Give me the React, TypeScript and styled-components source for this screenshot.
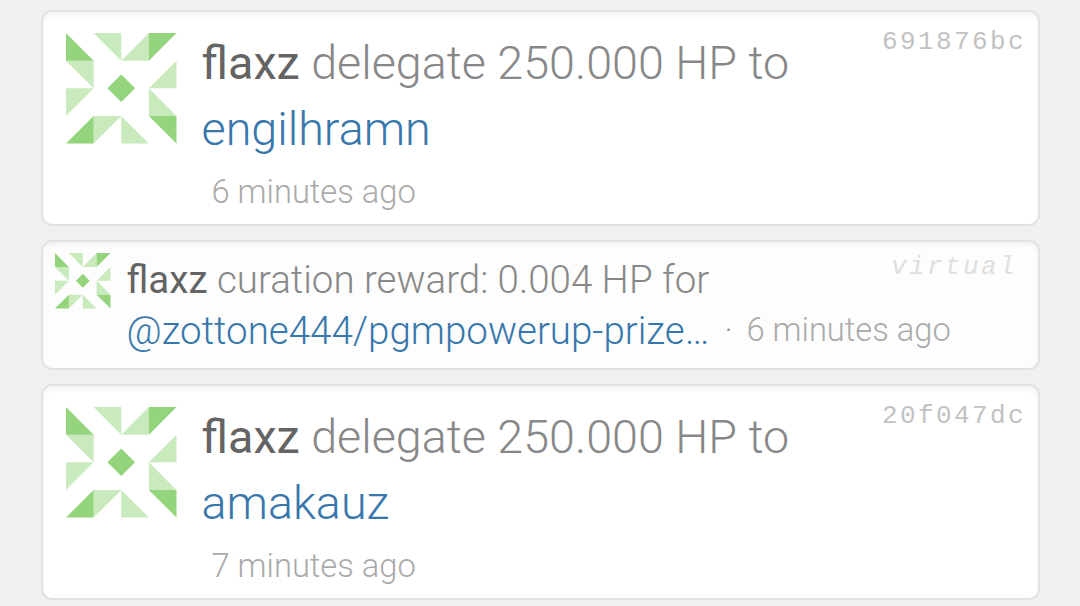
import React from 'react';
import styled, { createGlobalStyle } from 'styled-components';

type Operation = {
  id: string;
  actor: string;
  action: string;
  target: string;
  time: string;
  virtual?: boolean;
};

const operations: Operation[] = [
  { id: '691876bc', actor: 'flaxz', action: 'delegate 250.000 HP to', target: 'engilhramn', time: '6 minutes ago' },
  {
    id: 'virtual',
    actor: 'flaxz',
    action: 'curation reward: 0.004 HP for',
    target: '@zottone444/pgmpowerup-prize…',
    time: '6 minutes ago',
    virtual: true,
  },
  { id: '20f047dc', actor: 'flaxz', action: 'delegate 250.000 HP to', target: 'amakauz', time: '7 minutes ago' },
];

const Avatar = ({ size }: { size: number }) => (
  <AvatarSvg width={size} height={size} viewBox="0 0 4 4">
    <path fill="#c9eabc" d="M1 0H2V1ZM3 0V1H2ZM0 1H1V2ZM4 1V2H3ZM0 2H1L0 3ZM3 2L4 3H3ZM1 3H2L1 4ZM2 3L3 4H2Z" />
    <path fill="#93d47c" d="M0 0L1 1H0ZM3 0H4L3 1ZM1 3V4H0ZM3 3H4V4ZM2 1.5L2.5 2L2 2.5L1.5 2Z" />
  </AvatarSvg>
);

const App = () => {
  return (
    <>
      <GlobalStyle />
      <Container>
        {operations.map((op) => (
          <Card key={op.id} $small={op.virtual}>
            <Avatar size={op.virtual ? 55.5 : 110.5} />
            <Content $small={op.virtual}>
              <Header>
                <Title>
                  <Actor>{op.actor}</Actor> {op.action}
                </Title>
                <TxId $virtual={op.virtual}>{op.id}</TxId>
              </Header>
              <Line>
                <Target>{op.target}</Target>
                {op.virtual && <Dot>·</Dot>}
                {op.virtual && <Time $inline>{op.time}</Time>}
              </Line>
              {!op.virtual && <Time>{op.time}</Time>}
            </Content>
          </Card>
        ))}
      </Container>
    </>
  );
};

const GlobalStyle = createGlobalStyle`
  * {
    box-sizing: border-box;
  }
  body {
    margin: 0;
    height: 606px;
    overflow: hidden;
    background-color: #f0f0f0;
    font-family: Roboto, sans-serif;
    font-weight: 300;
  }
`;

const Container = styled.div`
  display: flex;
  flex-direction: column;
  gap: 14px;
  padding: 10px 40px 0 41px;
`;

const Card = styled.div<{ $small?: boolean }>`
  display: flex;
  align-items: flex-start;
  gap: ${({ $small }) => ($small ? 16 : 25)}px;
  height: ${({ $small }) => ($small ? 130 : 216)}px;
  padding: ${({ $small }) => ($small ? '11px 21px 0 12px' : '18px 12px 0 23px')};
  border: 2px solid #e2e2e2;
  border-radius: 11px;
  background-color: ${({ $small }) => ($small ? '#fdfdfd' : '#fff')};
  box-shadow: inset 0 3px 5px rgba(0, 0, 0, 0.05);

  > svg {
    margin-top: ${({ $small }) => ($small ? 0 : 3)}px;
  }
`;

const AvatarSvg = styled.svg`
  flex-shrink: 0;
`;

const Content = styled.div<{ $small?: boolean }>`
  flex: 1;
  padding-top: ${({ $small }) => ($small ? 1 : 0)}px;
  color: #888;
  font-size: ${({ $small }) => ($small ? 38.5 : 46.7)}px;
  line-height: ${({ $small }) => ($small ? 51 : 66)}px;
  white-space: nowrap;
`;

const Header = styled.div`
  display: flex;
  align-items: flex-start;
  justify-content: space-between;
`;

const Title = styled.div``;

const Line = styled.div`
  display: flex;
  align-items: center;
`;

const Actor = styled.strong`
  color: #646464;
  font-weight: 400;
`;

const Target = styled.a`
  color: #3877ab;
`;

const Dot = styled.span`
  padding: 0 14px 0 15px;
  color: #999;
  font-size: 32.7px;
`;

const Time = styled.div<{ $inline?: boolean }>`
  padding-left: ${({ $inline }) => ($inline ? 0 : 10)}px;
  color: #aaa;
  font-size: 32.7px;
  line-height: ${({ $inline }) => ($inline ? 'inherit' : '60px')};
`;

const TxId = styled.span<{ $virtual?: boolean }>`
  margin-top: ${({ $virtual }) => ($virtual ? -2 : -3)}px;
  color: ${({ $virtual }) => ($virtual ? '#dfdfdf' : '#c2c2c2')};
  font-family: 'Liberation Mono', monospace;
  font-size: 26px;
  font-style: ${({ $virtual }) => ($virtual ? 'italic' : 'normal')};
  letter-spacing: 2.4px;
  line-height: 30px;
`;

export default App;
